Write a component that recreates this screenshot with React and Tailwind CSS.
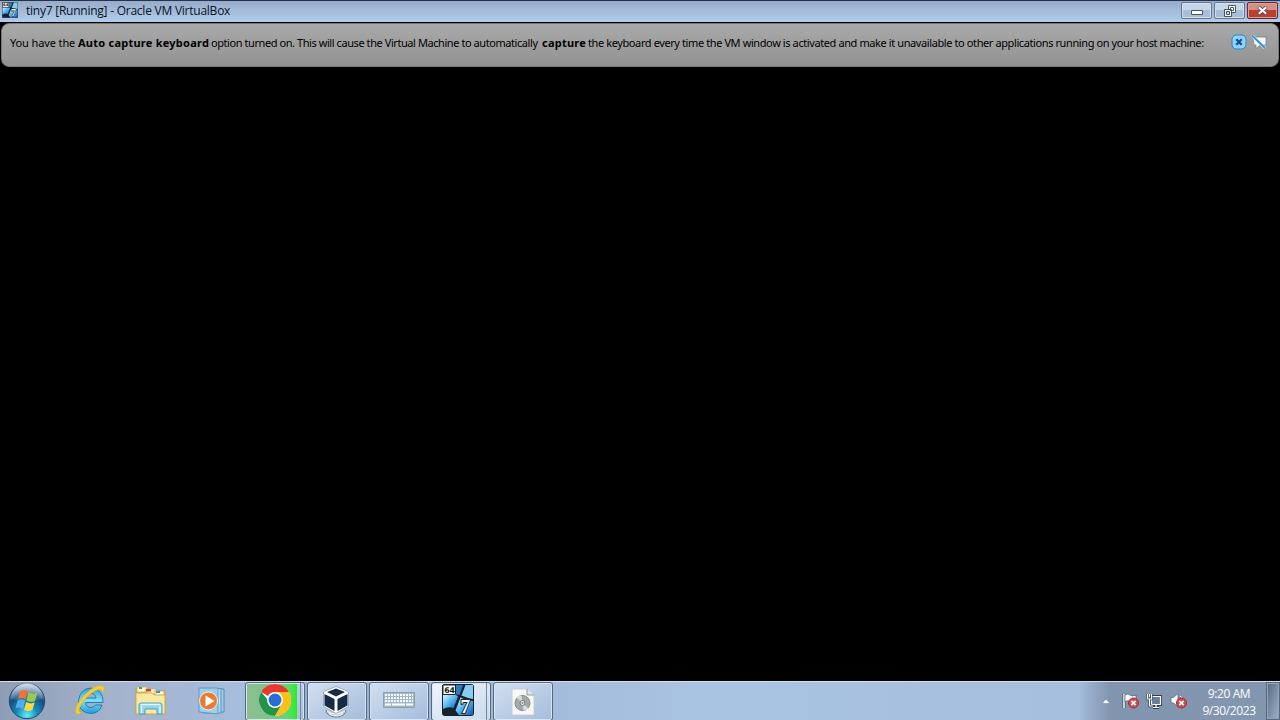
import React from "react";

function WindowsSevenIcon({ className }) {
  return (
    <svg viewBox="0 0 32 32" className={className}>
      <defs>
        <linearGradient id="w7" x1="0" y1="0" x2="1" y2="1">
          <stop offset="0" stopColor="#d9f5ff" />
          <stop offset=".5" stopColor="#53b4ee" />
          <stop offset="1" stopColor="#1259ab" />
        </linearGradient>
      </defs>
      <rect x=".5" y=".5" width="31" height="31" rx="2" fill="#16222f" stroke="#15222e" />
      <path d="M13 1H21L17.500 11 13 10Z" fill="#2f7cbc" />
      <path d="M23.500 1H31V15Q25 14 19.500 11.500Z" fill="#86cdf3" />
      <path d="M1 11H14L16 12.500 11.500 24Q6 22 1 25Z" fill="url(#w7)" />
      <path d="M18.500 13.500Q25 17 31 17V31H17Q15 28 13.500 26.500Z" fill="url(#w7)" />
      <path d="M1 1H13.500V10.500H1Z" fill="#fff" stroke="#18242c" />
      <text x="2.200" y="8.700" fontSize="7.800" fontWeight="700" fontFamily="DejaVu Sans" fill="#111">64</text>
      <text x="18.500" y="28.500" fontSize="19" fontWeight="700" fontFamily="Liberation Serif" fill="#fff" stroke="#0f2946" strokeWidth="2" paintOrder="stroke">7</text>
    </svg>
  );
}

function StartOrb() {
  return (
    <svg viewBox="0 0 38 38" className="h-[38px] w-[38px]">
      <defs>
        <radialGradient id="orb" cx=".5" cy=".9" r=".85">
          <stop offset="0" stopColor="#5bf0ff" />
          <stop offset=".35" stopColor="#168cb9" />
          <stop offset=".7" stopColor="#174d7c" />
          <stop offset="1" stopColor="#8ba6bf" />
        </radialGradient>
        <linearGradient id="orbShine" x2="0" y2="1">
          <stop stopColor="#fff" stopOpacity=".6" />
          <stop offset="1" stopColor="#fff" stopOpacity=".08" />
        </linearGradient>
      </defs>
      <circle cx="19" cy="19" r="17.7" fill="url(#orb)" stroke="#24486b" />
      <path d="M3 17A16 16 0 0 1 35 17Q19 21 3 17Z" fill="url(#orbShine)" />
      <path d="M12.500 9Q16 7 19.500 9L17.500 17.500Q14 15 10 17Z" fill="#f0713a" />
      <path d="M20.500 10Q25 13 29.500 10.500L27 19Q23 21 18.500 18.500Z" fill="#98cc4d" />
      <path d="M9.500 18.500Q14 16.500 17.200 19L15 27Q12 24.500 7.500 26Z" fill="#4db0ed" />
      <path d="M18.200 20Q22.500 22.500 26.600 20.600L24.400 28Q20.500 30 16 28Z" fill="#ffd741" />
    </svg>
  );
}

function ExplorerE() {
  return (
    <svg viewBox="0 0 34 34" className="h-[34px] w-[34px]">
      <defs>
        <linearGradient id="ie" x2="0" y2="1">
          <stop stopColor="#2ba4de" />
          <stop offset=".5" stopColor="#83def8" />
          <stop offset="1" stopColor="#2398d5" />
        </linearGradient>
      </defs>
      <path d="M30 19.500H12.500Q13 24.500 18 24.500Q21 24.500 22.400 22H29Q26.500 30.500 17.500 30.500Q5.500 29.500 5.500 18Q7 5.500 18 5Q30.500 6.500 30 19.500ZM12.700 15H23Q22.500 10.500 18 10.500Q13.700 10.500 12.700 15Z" fill="url(#ie)" stroke="#1478b1" strokeWidth=".9" />
      <path d="M4 31C-1 28 7 15 16 8C23 2 30 1 31 5C31.500 7 30 10 29 11C30 7 28 5 22 8C13 13 5 24 6 28Q6.500 30 10 28.500Q6 32 4 31Z" fill="#f7ce32" stroke="#d5ab28" strokeWidth=".5" />
    </svg>
  );
}

function FolderIcon() {
  return (
    <svg viewBox="0 0 34 30" className="h-[30px] w-[34px]">
      <path d="M2 3H12L14 5H31V28H2Z" fill="#e8c660" stroke="#b89d4f" />
      <path d="M3 1H13V6H3ZM12 3H22V8H12ZM20 5H30V10H20Z" fill="#fff7cb" stroke="#bd9e58" strokeWidth=".6" />
      <path d="M5 1H8V3H5Z" fill="#34a852" />
      <path d="M12 3H17V5.500H12Z" fill="#d64725" />
      <path d="M22 5H26V7H22Z" fill="#398fca" />
      <path d="M2 7H18L20 9H31V28H2Z" fill="#faeaa0" stroke="#c7ad61" />
      <path d="M5 28V19Q5 17 7 17H26Q28 17 28 19V28H23V23H11V28Z" fill="#91d2f0" stroke="#4c9dc6" />
      <path d="M6.500 18.500H26.500M7.500 20V27M26 20V27" stroke="#e2faff" strokeWidth="1.500" />
    </svg>
  );
}

function MediaIcon() {
  return (
    <svg viewBox="0 0 28 28" className="h-7 w-7">
      <path d="M8 2H26V25H8Z" fill="#a4cdea" stroke="#4a8fbe" />
      <path d="M5 1.500H23V26H5Z" fill="#b9dcf0" stroke="#4e91bf" />
      <path d="M1 1H20V27L1 25Z" fill="#a2cdea" stroke="#599ac4" />
      <circle cx="10.500" cy="14" r="9" fill="#ec7b32" stroke="#e7f1f6" />
      <path d="M7.500 8.500L16.500 14 7.500 19.500Z" fill="#fff" />
    </svg>
  );
}

function ChromeIcon() {
  return (
    <svg viewBox="0 0 34 34" className="h-[34px] w-[34px]">
      <circle cx="17" cy="17" r="16" fill="#fff" />
      <path d="M17 17L3.140 9A16 16 0 0 1 30.860 9H17Z" fill="#e33b2e" />
      <path d="M17 17H10L3.140 9A16 16 0 0 0 17 33L24 21Z" fill="#219447" />
      <path d="M17 9H30.860A16 16 0 0 1 17 33L24 21Z" fill="#fbc116" />
      <circle cx="17" cy="17" r="8" fill="#fff" />
      <circle cx="17" cy="17" r="6.500" fill="#286ed4" />
    </svg>
  );
}

function CubeIcon() {
  return (
    <svg viewBox="0 0 30 34" className="h-[34px] w-[30px]">
      <path d="M5 25Q5 31 15 32Q25 31 25 25" fill="#bec9d3" stroke="#5f7484" />
      <path d="M6 26Q14 32 24 26M8 29Q15 33 22 29" stroke="#fff" fill="none" />
      <path d="M2.500 6.500L15 1.500 27.500 6.500V21.500L15 28.500 2.500 21.500Z" fill="#fff" stroke="#8c9dac" strokeWidth=".8" />
      <path d="M6 7L15 3.500 24 7 15 11.500ZM3.500 9L13.500 14V26L3.500 20.500ZM16.500 14L26.500 9V20.500L16.500 26Z" fill="#142c49" />
    </svg>
  );
}

function KeyboardIcon() {
  return (
    <svg viewBox="0 0 32 16" className="h-4 w-8">
      <path d="M.5.5H31.500V15.500H.5Z" fill="#a2b6cb" stroke="#899eb3" />
      <path d="M2 3H30M2 6H30M2 9H30" stroke="#fff" strokeWidth="2" strokeDasharray="2 1" />
      <path d="M2 12.500H8M9 12.500H22M23 12.500H30" stroke="#fff" strokeWidth="2" />
    </svg>
  );
}

function DiscIcon() {
  return (
    <svg viewBox="0 0 24 28" className="h-7 w-6">
      <path d="M1 1H16L23 7V27H1Z" fill="#f7f8f7" stroke="#c6cccf" />
      <path d="M16 1V7H23" fill="#e1e5e7" stroke="#919da2" />
      <circle cx="11.500" cy="15" r="7.500" fill="#a5aaa9" stroke="#828989" />
      <path d="M11.500 15L5.500 9.500A8 8 0 0 1 10.500 7.500ZM11.500 15L17.500 20.500A8 8 0 0 1 12.500 22.500Z" fill="#d9ddda" />
      <circle cx="11.500" cy="15" r="2.500" fill="#eee" stroke="#777" />
      <circle cx="11.500" cy="15" r="1" fill="#858b8a" />
    </svg>
  );
}

function TrayError() {
  return (
    <>
      <circle cx="11.500" cy="11" r="5" fill="#d04a48" stroke="#a52d31" />
      <path d="M9.300 8.800L13.700 13.200M13.700 8.800L9.300 13.200" stroke="#fff" strokeWidth="1.700" />
    </>
  );
}

function FlagTrayIcon() {
  return (
    <svg viewBox="0 0 17 18" className="h-[18px] w-[17px]">
      <path d="M2 2V16" stroke="#34475a" strokeWidth="3" />
      <path d="M2 2V16" stroke="#fff" strokeWidth="1.500" />
      <path d="M3 3Q6 1 8 3Q10 5 14 3V10Q10 12 7 9Q5 8 3 10Z" fill="#fff" stroke="#43586a" strokeWidth=".7" />
      <TrayError />
    </svg>
  );
}

function NetworkTrayIcon() {
  return (
    <svg viewBox="0 0 17 18" className="h-[18px] w-[17px]">
      <path d="M5.500 4.500H14.500V12.500H5.500ZM10 13V15M7 15.500H13" fill="none" stroke="#303f4e" strokeWidth="3" />
      <path d="M5.500 4.500H14.500V12.500H5.500ZM10 13V15M7 15.500H13" fill="#687f94" stroke="#fff" strokeWidth="1.200" />
      <path d="M1.500 2V7H5.500V2M3.500 7V14H7" stroke="#354758" strokeWidth="2.400" fill="none" />
      <path d="M1.500 2V7H5.500V2M3.500 2V5M3.500 7V14H7" stroke="#fff" strokeWidth="1.100" fill="none" />
    </svg>
  );
}

function SoundTrayIcon() {
  return (
    <svg viewBox="0 0 17 18" className="h-[18px] w-[17px]">
      <path d="M1 5.500H3.500L8 1.500V15L3.500 11H1Z" fill="#fff" stroke="#526b80" strokeWidth=".8" />
      <path d="M10 4Q12 5 12 7" fill="none" stroke="#fff" />
      <TrayError />
    </svg>
  );
}

function TitleBar() {
  return (
    <header className="flex h-[22px] shrink-0 items-start border-t border-[#26334f] bg-linear-to-b from-[#98acc9] to-[#b1cceb]">
      <WindowsSevenIcon className="ml-0.5 mt-px h-4 w-4 shrink-0" />
      <h1 className="ml-2 flex-1 whitespace-nowrap font-['Open_Sans',sans-serif] text-[12px] leading-[19px] tracking-[-0.24px] text-[#07121f]">
        tiny7 [Running] - Oracle VM VirtualBox
      </h1>
      <div className="mr-0.5 mt-px flex gap-0.5">
        <button aria-label="Minimize" className="flex h-[17px] w-[31px] items-center justify-center rounded-[2px] border border-[#65768e] bg-linear-to-b from-[#c6d5e8] from-45% to-[#a8bed7] to-50% shadow-[inset_0_0_0_1px_#d0deed]">
          <svg viewBox="0 0 12 7" className="mt-1 h-[7px] w-3"><path d="M.5 1.500H11.500V5.500H.5Z" fill="#fff" stroke="#465363" /></svg>
        </button>
        <button aria-label="Restore" className="flex h-[17px] w-[31px] items-center justify-center rounded-[2px] border border-[#65768e] bg-linear-to-b from-[#c6d5e8] from-45% to-[#a8bed7] to-50% shadow-[inset_0_0_0_1px_#d0deed]">
          <svg viewBox="0 0 12 12" className="h-3 w-3"><path d="M4.500.5H11.500V7.500H4.500Z" fill="#fff" stroke="#465363" /><path d="M6.500 2.500H9.500V5.500H6.500ZM.5 4.500H7.500V11.500H.5Z" fill="#fff" stroke="#465363" /><path d="M2.500 6.500H5.500V9.500H2.500Z" fill="#c5d4e5" stroke="#465363" /></svg>
        </button>
        <button aria-label="Close" className="flex h-[17px] w-[31px] items-center justify-center rounded-[2px] border border-[#652832] bg-linear-to-b from-[#d68f83] from-45% to-[#bc3e2d] to-50% shadow-[inset_0_0_0_1px_#dca098]">
          <svg viewBox="0 0 11 9" className="h-[9px] w-[11px]"><path d="M1.500 1L9.500 8M9.500 1L1.500 8" stroke="#514354" strokeWidth="3.600" /><path d="M1.800 1.200L9.200 7.800M9.200 1.200L1.800 7.800" stroke="#fff" strokeWidth="2.200" /></svg>
        </button>
      </div>
    </header>
  );
}

function CaptureNotice() {
  return (
    <section className="mx-px mt-px flex h-11 shrink-0 items-start rounded-lg border border-[#777] bg-linear-to-b from-[#a9a9a9] to-[#929292]">
      <p className="ml-2 mt-[11px] flex h-4 flex-1 whitespace-nowrap font-['Noto_Sans',sans-serif] text-[11px] leading-4 text-black">
        <span className="w-[68px] tracking-[-0.12px]">You have the</span>
        <b className="w-[133px] tracking-[0.24px]">Auto capture keyboard</b>
        <span className="w-[331px] tracking-[-0.43px]">option turned on. This will cause the Virtual Machine to automatically</span>
        <b className="w-[46px] tracking-[0.24px]">capture</b>
        <span className="w-[618px] tracking-[-0.4px]">the keyboard every time the VM window is activated and make it unavailable to other applications running on your host machine:</span>
      </p>
      <div className="mr-[11px] mt-2.5 flex gap-1">
        <svg viewBox="0 0 16 16" className="h-4 w-4"><rect x="1" y="1" width="14" height="14" rx="4.500" fill="#8bd4ff" stroke="#2582c4" /><path d="M5.300 5.300L10.700 10.700M10.700 5.300L5.300 10.700" stroke="#12518c" strokeWidth="2.300" /></svg>
        <svg viewBox="0 0 16 16" className="h-4 w-4"><path d="M1.500 3H15V11H9.500L5 14.500V11H3Z" fill="#f5f7f8" stroke="#777f87" strokeWidth=".8" /><path d="M1 1.500L14 14" stroke="#fff" strokeWidth="3" /><path d="M1 1.500L14 14" stroke="#3292d6" strokeWidth="2" /></svg>
      </div>
    </section>
  );
}

function TaskButton({ label, className = "", children }) {
  return (
    <button aria-label={label} className={"flex h-[39px] w-[60px] shrink-0 items-center justify-center rounded-[3px] border border-[#526983] bg-linear-to-br shadow-[inset_0_0_0_1px_#d7e5f4] " + className}>
      {children}
    </button>
  );
}

function TaskBar() {
  return (
    <footer className="flex h-[39px] shrink-0 border-t border-[#d3e0ed] bg-linear-to-r from-[#92a2bb] via-[#a9c3e3] via-55% to-[#a4bcda]">
      <div className="flex w-[245px] shrink-0 items-center bg-linear-to-r from-[#8d9db5] via-[#a4b2cc] via-45% to-[#a5bddd]">
        <div className="ml-2 flex w-[65px]"><StartOrb /></div>
        <div className="-mt-[3px] flex w-[61px]"><ExplorerE /></div>
        <div className="flex w-[64px]"><FolderIcon /></div>
        <MediaIcon />
      </div>
      <nav className="flex gap-0.5">
        <TaskButton label="Google Chrome" className="relative overflow-hidden from-[#d2dff0] to-[#a4bcdc]">
          <span className="absolute inset-y-px left-px w-[50px] bg-linear-to-r from-[#8dbd91] via-[#77c985] via-65% to-[#21ed20]" />
          <span className="absolute inset-y-0 right-[3px] w-px bg-[#71869f]" />
          <span className="relative -mt-[3px]"><ChromeIcon /></span>
        </TaskButton>
        <TaskButton label="VirtualBox Manager" className="from-[#d2dff0] to-[#a4bcdc] pr-0.5"><CubeIcon /></TaskButton>
        <TaskButton label="On-Screen Keyboard" className="from-[#d2dff0] to-[#a4bcdc] pb-1"><KeyboardIcon /></TaskButton>
        <TaskButton label="tiny7" className="relative from-[#eff5fc] to-[#cad9ec] pb-1 pr-1.5">
          <WindowsSevenIcon className="h-8 w-8" />
          <span className="absolute inset-y-0 right-[3px] w-px bg-[#71869f]" />
        </TaskButton>
        <TaskButton label="Disc image" className="from-[#d2dff0] to-[#a4bcdc]"><DiscIcon /></TaskButton>
      </nav>
      <div className="ml-auto flex w-[200px] items-center bg-linear-to-r from-[#a2bbd9] via-[#8195af] via-15% to-[#8296b0] font-['Open_Sans',sans-serif] text-white">
        <svg viewBox="0 0 8 5" className="ml-[22px] h-[5px] w-2"><path d="M0 4.500L4 0 8 4.500Z" fill="#f6fbff" stroke="#66798e" strokeWidth=".5" /></svg>
        <div className="ml-3 flex gap-[7px]"><FlagTrayIcon /><NetworkTrayIcon /><SoundTrayIcon /></div>
        <div className="mb-[3px] ml-auto flex w-[64px] flex-col items-center whitespace-nowrap text-[12px] leading-[17px] tracking-[-0.4px]">
          <time className="mt-1">9:20 AM</time><span>9/30/2023</span>
        </div>
        <div className="ml-[5px] h-[38px] w-[14px] border border-[#58697e] bg-linear-to-br from-[#596b83] to-[#a0b2c9] shadow-[inset_0_0_0_1px_#91a3b9]" />
      </div>
    </footer>
  );
}

export default function App() {
  return (
    <div className="flex h-[720px] w-[1280px] flex-col overflow-hidden bg-black">
      <TitleBar />
      <CaptureNotice />
      <main className="flex-1 bg-black" />
      <TaskBar />
    </div>
  );
}
